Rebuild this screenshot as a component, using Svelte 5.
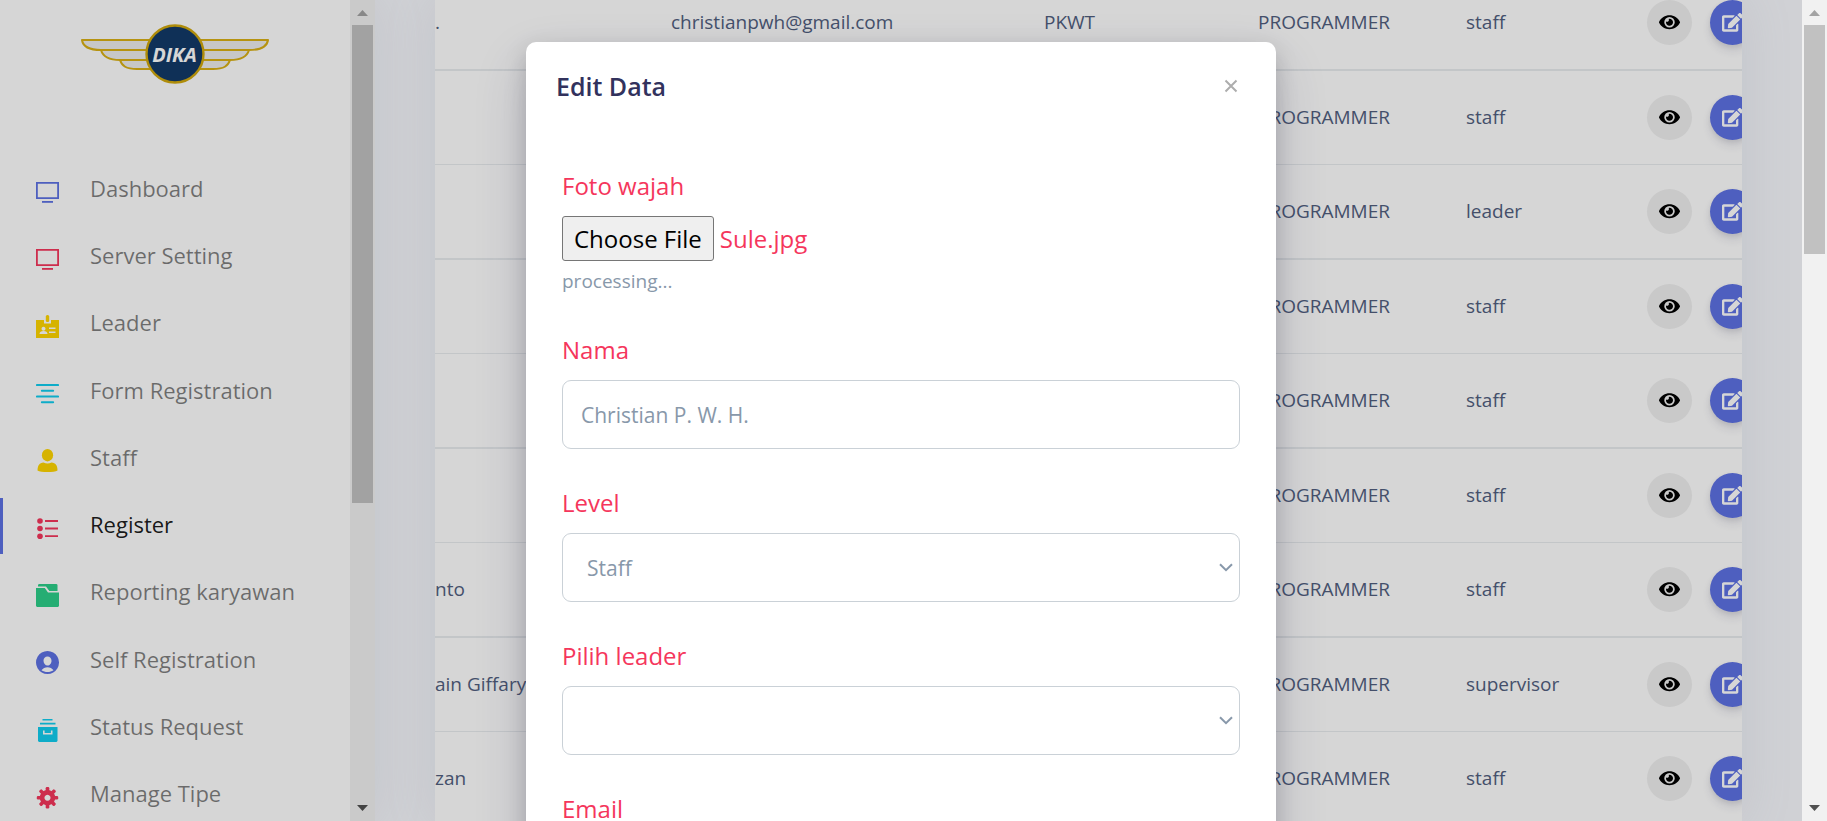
<script>
  const menu = [
    { label: 'Dashboard', icon: 'tv', color: '#5e72e4' },
    { label: 'Server Setting', icon: 'tv', color: '#f5365c' },
    { label: 'Leader', icon: 'badge', color: '#ffd600' },
    { label: 'Form Registration', icon: 'lines', color: '#11cdef' },
    { label: 'Staff', icon: 'person', color: '#ffd600' },
    { label: 'Register', icon: 'bullets', color: '#f5365c', active: true },
    { label: 'Reporting karyawan', icon: 'folder', color: '#2dce89' },
    { label: 'Self Registration', icon: 'circle', color: '#5e72e4' },
    { label: 'Status Request', icon: 'archive', color: '#11cdef' },
    { label: 'Manage Tipe', icon: 'gear', color: '#f5365c' }
  ];

  const rows = [
    { name: '.', email: 'christianpwh@gmail.com', status: 'PKWT', level: 'staff' },
    { name: '', level: 'staff' },
    { name: '', level: 'leader' },
    { name: '', level: 'staff' },
    { name: '', level: 'staff' },
    { name: '', level: 'staff' },
    { name: 'nto', level: 'staff' },
    { name: 'ain Giffary', level: 'supervisor' },
    { name: 'zan', level: 'staff' }
  ];

  const teeth = [0, 45, 90, 135, 180, 225, 270, 315];

  function preselect(node) {
    const transfer = new DataTransfer();
    transfer.items.add(new File([''], 'Sule.jpg', { type: 'image/jpeg' }));
    node.files = transfer.files;
  }
</script>

{#snippet scrollbar(size)}
  <div class="scrollbar" aria-hidden="true">
    <svg class="arrow up" viewBox="0 0 25 25"><path d="M7 16 12.500 10 18 16z" /></svg>
    <div class="track"><div class="thumb" style="height: {size}%"></div></div>
    <svg class="arrow down" viewBox="0 0 25 25"><path d="M7 9 12.500 15 18 9z" /></svg>
  </div>
{/snippet}

{#snippet menuIcon(name)}
  <svg class="menu-icon" viewBox="0 0 23 23" aria-hidden="true">
    {#if name === 'tv'}
      <path d="M.9 2.900h21.200v15.200H.9z" fill="none" stroke="currentColor" stroke-width="1.800" />
      <path d="M6 21h11v1.800H6z" />
    {:else if name === 'badge'}
      <path fill-rule="evenodd" d="M0 5h8v3.500h7V5h8v18H0zM7.500 11.700a2 2 0 1 0 .01 0zM3.500 19h8c0-2-1.500-3-4-3s-4 1-4 3zM13 12.500h6.500V14H13zm0 4h6.500V18H13z" />
      <rect x="9.800" y="0" width="3.400" height="7" rx="1.500" />
    {:else if name === 'lines'}
      <path d="M.9 3h21.200M5.800 8.700h11.400M.9 14.500h21.200M5.800 20.200h11.400" fill="none" stroke="currentColor" stroke-width="1.900" stroke-linecap="round" />
    {:else if name === 'person'}
      <ellipse cx="11.500" cy="6.200" rx="5.600" ry="6.200" />
      <path d="M1.500 21.500c0-5 2-7.700 6-8 2.500 1.200 5.500 1.200 8 0 4 .3 6 3 6 8-3 2-17 2-20 0z" />
    {:else if name === 'bullets'}
      <circle cx="4" cy="4" r="2.800" /><circle cx="4" cy="11.500" r="2.800" /><circle cx="4" cy="19.200" r="2.800" />
      <path d="M9 4h13M9 11.500h13M9 19.200h13" fill="none" stroke="currentColor" stroke-width="1.800" />
    {:else if name === 'folder'}
      <path d="M2 2.500V.8L3 0h17.500l1 .8V7h-8.200L10 2.500z" />
      <path d="M0 4h8.800L12 8.500h11V22l-1 1H1l-1-1z" />
    {:else if name === 'circle'}
      <path fill-rule="evenodd" d="M11.500 0a11.500 11.500 0 1 0 .01 0zM11.500 5.500c2.300 0 4 1.700 4 4.200 0 2.600-1.700 4.800-4 4.800s-4-2.200-4-4.800c0-2.500 1.700-4.200 4-4.200zM5.500 19.300c1.500-2.200 3.500-3.100 6-3.100s4.500.9 6 3.100c-1.800 1.200-3.800 1.800-6 1.800s-4.200-.6-6-1.800z" />
    {:else if name === 'archive'}
      <path d="M6.500 0h10v1.600h-10zM4 3.800h15.500v1.800H4z" />
      <path fill-rule="evenodd" d="M2 8h19.500v14l-1 1h-17.500l-1-1zM7 11.500v4h9.500v-4h-1.600v2.400H8.600v-2.400z" />
    {:else}
      <path fill-rule="evenodd" d="M11.500 4a7.700 7.700 0 1 0 .01 0zm0 4.700a3 3 0 1 1-.01 0z" />
      {#each teeth as angle}
        <rect x="9.700" y="1" width="3.600" height="5" rx="1.200" transform="rotate({angle} 11.500 11.700)" />
      {/each}
    {/if}
  </svg>
{/snippet}

{#snippet chevron()}
  <svg class="chevron" viewBox="0 0 14 9" aria-hidden="true"><path d="M1 1.200 7 7.200 13 1.200" /></svg>
{/snippet}

<div class="page">
  <div class="app">
    <aside class="sidebar">
      <div class="sidebar-content">
        <a class="brand" href="#home" aria-label="DIKA">
          <svg viewBox="0 0 188 60">
            <g fill="#eeeeee" stroke="#d9b015" stroke-width="2" stroke-linejoin="round">
              <path d="M39 36h31v9H56c-11 0-15-3-17-9zM149 36h-31v9h14c11 0 15-3 17-9z" />
              <path d="M20 26h50v10H39c-11 0-17-3-19-10zM168 26h-50v10h31c11 0 17-3 19-10z" />
              <path d="M1 16h69v10H20C9 26 2 23 1 16zM187 16h-69v10h50c11 0 18-3 19-10z" />
            </g>
            <circle cx="94" cy="30" r="28.500" fill="#123a68" stroke="#d1a80e" stroke-width="2.400" />
            <text x="93.500" y="38" text-anchor="middle">DIKA</text>
          </svg>
        </a>
        <nav>
          {#each menu as item}
            <a href="#{item.icon}" class:active={item.active}>
              <span class="icon-cell" style="color: {item.color}">{@render menuIcon(item.icon)}</span>
              <span class="menu-label">{item.label}</span>
            </a>
          {/each}
        </nav>
      </div>
      {@render scrollbar(62)}
    </aside>

    <main>
      <div class="card">
        <table>
          <colgroup>
            <col class="c-name" /><col class="c-email" /><col class="c-status" />
            <col class="c-job" /><col class="c-level" /><col />
          </colgroup>
          <tbody>
            {#each rows as row}
              <tr>
                <td>{row.name}</td>
                <td>{row.email ?? ''}</td>
                <td>{row.status ?? ''}</td>
                <td>PROGRAMMER</td>
                <td>{row.level}</td>
                <td>
                  <div class="actions">
                    <button class="round view" aria-label="View">
                      <svg viewBox="0 0 576 512"><path d="M572.520 241.400C518.290 135.590 410.930 64 288 64S57.680 135.640 3.480 241.410a32.350 32.350 0 0 0 0 29.190C57.710 376.410 165.070 448 288 448s230.320-71.640 284.520-177.410a32.350 32.350 0 0 0 0-29.190zM288 400a144 144 0 1 1 144-144 143.930 143.930 0 0 1-144 144zm0-240a95.310 95.310 0 0 0-25.310 3.790 47.850 47.850 0 0 1-66.900 66.900A95.780 95.780 0 1 0 288 160z" /></svg>
                    </button>
                    <button class="round edit" aria-label="Edit">
                      <svg viewBox="0 0 576 512"><path d="M402.600 83.200l90.200 90.200c3.800 3.800 3.800 10 0 13.800L274.400 405.600l-92.800 10.300c-12.400 1.400-22.900-9.100-21.500-21.500l10.300-92.800L388.800 83.200c3.800-3.800 10-3.800 13.800 0zm162-22.900l-48.800-48.800c-15.200-15.200-39.900-15.200-55.200 0l-35.400 35.400c-3.800 3.800-3.800 10 0 13.800l90.200 90.200c3.800 3.800 10 3.800 13.800 0l35.400-35.400c15.200-15.300 15.200-40 0-55.200zM384 346.200V448H64V128h229.800c3.200 0 6.200-1.300 8.500-3.500l40-40c7.600-7.600 2.200-20.500-8.500-20.500H48C21.500 64 0 85.500 0 112v352c0 26.500 21.500 48 48 48h352c26.500 0 48-21.500 48-48V306.200c0-10.700-12.900-16-20.500-8.500l-40 40c-2.200 2.300-3.500 5.300-3.500 8.500z" /></svg>
                    </button>
                  </div>
                </td>
              </tr>
            {/each}
          </tbody>
        </table>
      </div>
    </main>

    <div class="backdrop">
      <div class="modal" role="dialog" aria-modal="true" aria-labelledby="modal-title">
        <header>
          <h2 id="modal-title">Edit Data</h2>
          <button class="close" aria-label="Close">
            <svg viewBox="0 0 14 14"><path d="M1.500 1.500l11 11M12.500 1.500l-11 11" /></svg>
          </button>
        </header>
        <form>
          <div class="field">
            <label for="photo">Foto wajah</label>
            <input id="photo" type="file" use:preselect />
            <small>processing...</small>
          </div>
          <div class="field">
            <label for="name">Nama</label>
            <input id="name" class="control" type="text" value="Christian P. W. H." />
          </div>
          <div class="field">
            <label for="level">Level</label>
            <div class="select">
              <select id="level" class="control"><option>Staff</option></select>
              {@render chevron()}
            </div>
          </div>
          <div class="field">
            <label for="leader">Pilih leader</label>
            <div class="select">
              <select id="leader" class="control"><option></option></select>
              {@render chevron()}
            </div>
          </div>
          <div class="field">
            <label for="email">Email</label>
            <input id="email" class="control" type="email" />
          </div>
        </form>
      </div>
    </div>
  </div>
  {@render scrollbar(29.7)}
</div>

<style>
  :global(body) {
    margin: 0;
    font-family: 'Open Sans', sans-serif;
    color: #525f7f;
  }
  * {
    box-sizing: border-box;
  }
  svg {
    display: block;
    fill: currentColor;
  }
  button {
    padding: 0;
    border: 0;
    background: none;
    font: inherit;
    cursor: pointer;
  }
  .page {
    display: flex;
    height: 100vh;
    overflow: hidden;
  }
  .app {
    position: relative;
    display: flex;
    flex: 1;
    min-width: 0;
    background: #f8f9fe;
  }

  .scrollbar {
    display: flex;
    flex-direction: column;
    flex: none;
    width: 25px;
    background: #f1f1f1;
  }
  .arrow {
    width: 25px;
    height: 25px;
  }
  .up {
    color: #a3a3a3;
  }
  .down {
    color: #505050;
  }
  .track {
    flex: 1;
    padding: 0 2px;
  }
  .thumb {
    background: #c1c1c1;
  }

  .sidebar {
    display: flex;
    flex: none;
    width: 375px;
    background: #fff;
    box-shadow: 0 0 48px rgba(136, 152, 170, 0.15);
  }
  .sidebar-content {
    display: flex;
    flex-direction: column;
    flex: 1;
    gap: 78px;
    padding-top: 24px;
    overflow: hidden;
  }
  .brand {
    align-self: center;
    width: 188px;
  }
  .brand text {
    fill: #fff;
    font-size: 20px;
    font-weight: 700;
    font-style: italic;
  }
  nav {
    display: grid;
    flex: none;
    grid-auto-rows: 1fr;
    row-gap: 12px;
    min-height: 661px;
  }
  nav a {
    display: flex;
    align-items: center;
    padding: 0 33px;
    border-left: 3px solid transparent;
    color: rgba(0, 0, 0, 0.5);
    font-size: 22px;
    line-height: 33px;
    text-decoration: none;
    white-space: nowrap;
  }
  nav a.active {
    border-color: #5e72e4;
    color: rgba(0, 0, 0, 0.9);
  }
  .icon-cell {
    width: 54px;
    padding-top: 4px;
  }
  .menu-label {
    padding-bottom: 3px;
  }
  .menu-icon {
    width: 23px;
    height: 23px;
  }

  main {
    flex: 1;
    min-width: 0;
    padding: 0 60px;
  }
  .card {
    height: 100%;
    background: #fff;
    box-shadow: 0 0 48px rgba(136, 152, 170, 0.15);
    overflow: hidden;
  }
  table {
    width: calc(100% + 24px);
    margin-top: -25px;
    border-collapse: separate;
    border-spacing: 0;
    table-layout: fixed;
    font-size: 19px;
    line-height: 29px;
  }
  .c-name {
    width: 236px;
  }
  .c-email {
    width: 373px;
  }
  .c-status {
    width: 214px;
  }
  .c-job {
    width: 208px;
  }
  .c-level {
    width: 181px;
  }
  td {
    padding: 24px 0;
    border-top: 1px solid #e9ecef;
    vertical-align: middle;
    white-space: nowrap;
  }
  tr:nth-child(even) td {
    border-top-width: 2px;
  }
  .actions {
    display: flex;
    gap: 18px;
  }
  .round {
    display: flex;
    flex: none;
    align-items: center;
    justify-content: center;
    width: 45px;
    height: 45px;
    border-radius: 50%;
  }
  .round svg {
    width: 21px;
  }
  .view {
    background: #f0f0f0;
    color: #000;
  }
  .edit {
    background: #5e72e4;
    color: #fff;
    box-shadow: 0 6px 9px rgba(50, 50, 93, 0.11), 0 2px 5px rgba(0, 0, 0, 0.08);
  }

  .backdrop {
    position: absolute;
    inset: 0;
    display: flex;
    align-items: flex-start;
    justify-content: center;
    padding-top: 42px;
    background: rgba(0, 0, 0, 0.16);
    overflow: hidden;
  }
  .modal {
    width: 750px;
    border-radius: 10px;
    background: #fff;
    box-shadow: 0 22px 52px rgba(50, 50, 93, 0.2), 0 8px 22px rgba(0, 0, 0, 0.17);
  }
  header {
    display: flex;
    align-items: flex-start;
    justify-content: space-between;
    padding: 30px 38px 32px 30px;
  }
  h2 {
    margin: 0;
    color: #32325d;
    font-size: 25px;
    font-weight: 600;
    line-height: 28px;
  }
  .close {
    padding-top: 7px;
    color: #adadad;
  }
  .close svg {
    width: 14px;
    stroke: currentColor;
    stroke-width: 2;
  }
  form {
    display: grid;
    gap: 36px;
    padding: 36px;
  }
  .field {
    display: flex;
    flex-direction: column;
    align-items: stretch;
  }
  label {
    margin-bottom: 12px;
    color: #f5365c;
    font-size: 24px;
    line-height: 36px;
  }
  input[type='file'] {
    color: #f5365c;
    font: inherit;
    font-size: 24px;
    line-height: 36px;
  }
  input[type='file']::file-selector-button {
    height: 45px;
    margin-right: 6px;
    padding: 0 11px;
    border: 1px solid #767676;
    border-radius: 3px;
    background: #efefef;
    color: #000;
    font: inherit;
  }
  small {
    margin-top: 6px;
    color: #8898aa;
    font-size: 19px;
    line-height: 29px;
  }
  .control {
    width: 100%;
    height: 69px;
    padding: 0 18px;
    border: 1px solid #cad1d7;
    border-radius: 9px;
    background: #fff;
    color: #8898aa;
    font: inherit;
    font-size: 21px;
    appearance: none;
  }
  select.control {
    padding: 0 24px;
  }
  .select {
    position: relative;
  }
  .chevron {
    position: absolute;
    top: 30px;
    right: 7px;
    width: 14px;
    fill: none;
    stroke: #8898aa;
    stroke-width: 2;
    pointer-events: none;
  }
</style>
